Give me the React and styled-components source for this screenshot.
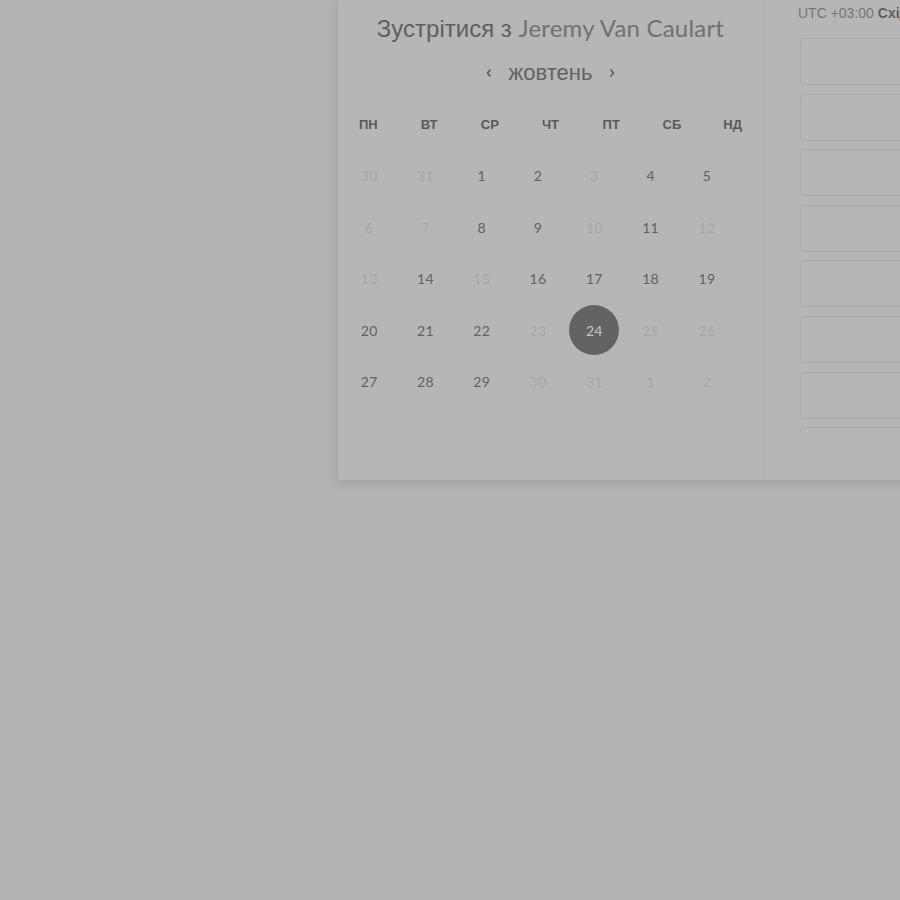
import React, { useState } from 'react'
import styled, { createGlobalStyle } from 'styled-components'

const GlobalStyle = createGlobalStyle`
  html, body {
    margin: 0;
    padding: 0;
    background: #b2b2b2;
    overflow: hidden;
  }
  body {
    font-family: 'Liberation Sans', Arial, sans-serif;
  }
`

const weekdays = ['пн', 'вт', 'ср', 'чт', 'пт', 'сб', 'нд']

// [day, available]
const days = [
  [30, false], [31, false], [1, true], [2, true], [3, false], [4, true], [5, true],
  [6, false], [7, false], [8, true], [9, true], [10, false], [11, true], [12, false],
  [13, false], [14, true], [15, false], [16, true], [17, true], [18, true], [19, true],
  [20, true], [21, true], [22, true], [23, false], [24, true], [25, false], [26, false],
  [27, true], [28, true], [29, true], [30, false], [31, false], [1, false], [2, false],
]

const Page = styled.div`
  display: flex;
  padding-left: 338px;
  width: 900px;
  height: 900px;
  box-sizing: border-box;
`

const Modal = styled.div`
  display: flex;
  align-self: flex-start;
  flex-shrink: 0;
  width: 760px;
  height: 480px;
  background: #b6b6b6;
  box-shadow: 0 2px 9px rgba(0, 0, 0, 0.13);
`

const CalendarSide = styled.section`
  width: 425px;
  flex-shrink: 0;
  padding-top: 14px;
  border-right: 1px solid #adadad;
`

const Title = styled.h1`
  margin: 0;
  text-align: center;
  font-size: 24px;
  line-height: 28px;
  font-weight: 400;
  color: #5f5f5f;
  span {
    font-family: Lato, 'Open Sans', sans-serif;
    color: #717171;
    letter-spacing: 0.2px;
  }
`

const MonthBar = styled.div`
  display: flex;
  justify-content: center;
  align-items: center;
  gap: 14px;
  margin-top: 16px;
  height: 28px;
  color: #666;
`

const MonthName = styled.span`
  font-size: 22px;
  line-height: 28px;
  color: #636363;
`

const Arrow = styled.button`
  display: flex;
  align-items: center;
  justify-content: center;
  width: 12px;
  height: 20px;
  padding: 0;
  border: 0;
  background: none;
  color: #5c5c5c;
  cursor: pointer;
`

const WeekRow = styled.div`
  display: grid;
  grid-template-columns: repeat(7, 1fr);
  margin-top: 28px;
  height: 20px;
`

const WeekDay = styled.div`
  text-align: center;
  font-size: 13px;
  line-height: 20px;
  font-weight: 700;
  text-transform: uppercase;
  color: #5a5a5a;
`

const DayGrid = styled.div`
  display: grid;
  grid-template-columns: repeat(7, 56.3px);
  grid-auto-rows: 51.5px;
  margin-top: 15px;
  padding-left: 3px;
`

const DayCell = styled.div`
  display: flex;
  align-items: center;
  justify-content: center;
`

const Day = styled.button`
  width: 50px;
  height: 50px;
  padding: 0;
  border: 0;
  border-radius: 50%;
  font-family: Lato, 'Open Sans', sans-serif;
  font-size: 14px;
  letter-spacing: 0.3px;
  background: ${(p) => (p.$selected ? '#636363' : 'transparent')};
  color: ${(p) => (p.$selected ? '#c2c2c2' : p.$available ? '#626262' : '#a7a7a7')};
  cursor: ${(p) => (p.$available ? 'pointer' : 'default')};
`

const TimeSide = styled.section`
  flex: 1;
  padding: 5px 0 0 34px;
  display: flex;
  flex-direction: column;
`

const Zone = styled.div`
  font-size: 14px;
  line-height: 16px;
  color: #767676;
  white-space: nowrap;
  b {
    color: #5e5e5e;
  }
`

const SlotList = styled.div`
  margin-top: 17px;
  padding-left: 2px;
  height: 394px;
  overflow: hidden;
  display: flex;
  flex-direction: column;
  gap: 8.6px;
`

const Slot = styled.button`
  flex-shrink: 0;
  height: 47px;
  width: 240px;
  border: 1px solid #a9a9a9;
  border-radius: 4px;
  background: transparent;
`

const ChevronLeft = () => (
  <svg width='8' height='12' viewBox='0 0 8 12'>
    <path d='M5.5 2.5L2.5 6l3 3.5' fill='none' stroke='currentColor' strokeWidth='1.6' />
  </svg>
)

const ChevronRight = () => (
  <svg width='8' height='12' viewBox='0 0 8 12'>
    <path d='M2.5 2.5L5.5 6l-3 3.5' fill='none' stroke='currentColor' strokeWidth='1.6' />
  </svg>
)

const App = () => {
  const [selected, setSelected] = useState(24)

  return (
    <>
      <GlobalStyle />
      <Page>
        <Modal>
          <CalendarSide>
            <Title>
              Зустрітися з <span>Jeremy Van Caulart</span>
            </Title>
            <MonthBar>
              <Arrow aria-label='попередній'>
                <ChevronLeft />
              </Arrow>
              <MonthName>жовтень</MonthName>
              <Arrow aria-label='наступний'>
                <ChevronRight />
              </Arrow>
            </MonthBar>
            <WeekRow>
              {weekdays.map((d) => (
                <WeekDay key={d}>{d}</WeekDay>
              ))}
            </WeekRow>
            <DayGrid>
              {days.map(([day, available], index) => (
                <DayCell key={index}>
                  <Day
                    $available={available}
                    $selected={available && day === selected}
                    onClick={() => available && setSelected(day)}
                  >
                    {day}
                  </Day>
                </DayCell>
              ))}
            </DayGrid>
          </CalendarSide>
          <TimeSide>
            <Zone>
              UTC +03:00 <b>Східна Європа</b>
            </Zone>
            <SlotList>
              {Array.from({ length: 8 }).map((_, i) => (
                <Slot key={i} />
              ))}
            </SlotList>
          </TimeSide>
        </Modal>
      </Page>
    </>
  )
}

export default App
